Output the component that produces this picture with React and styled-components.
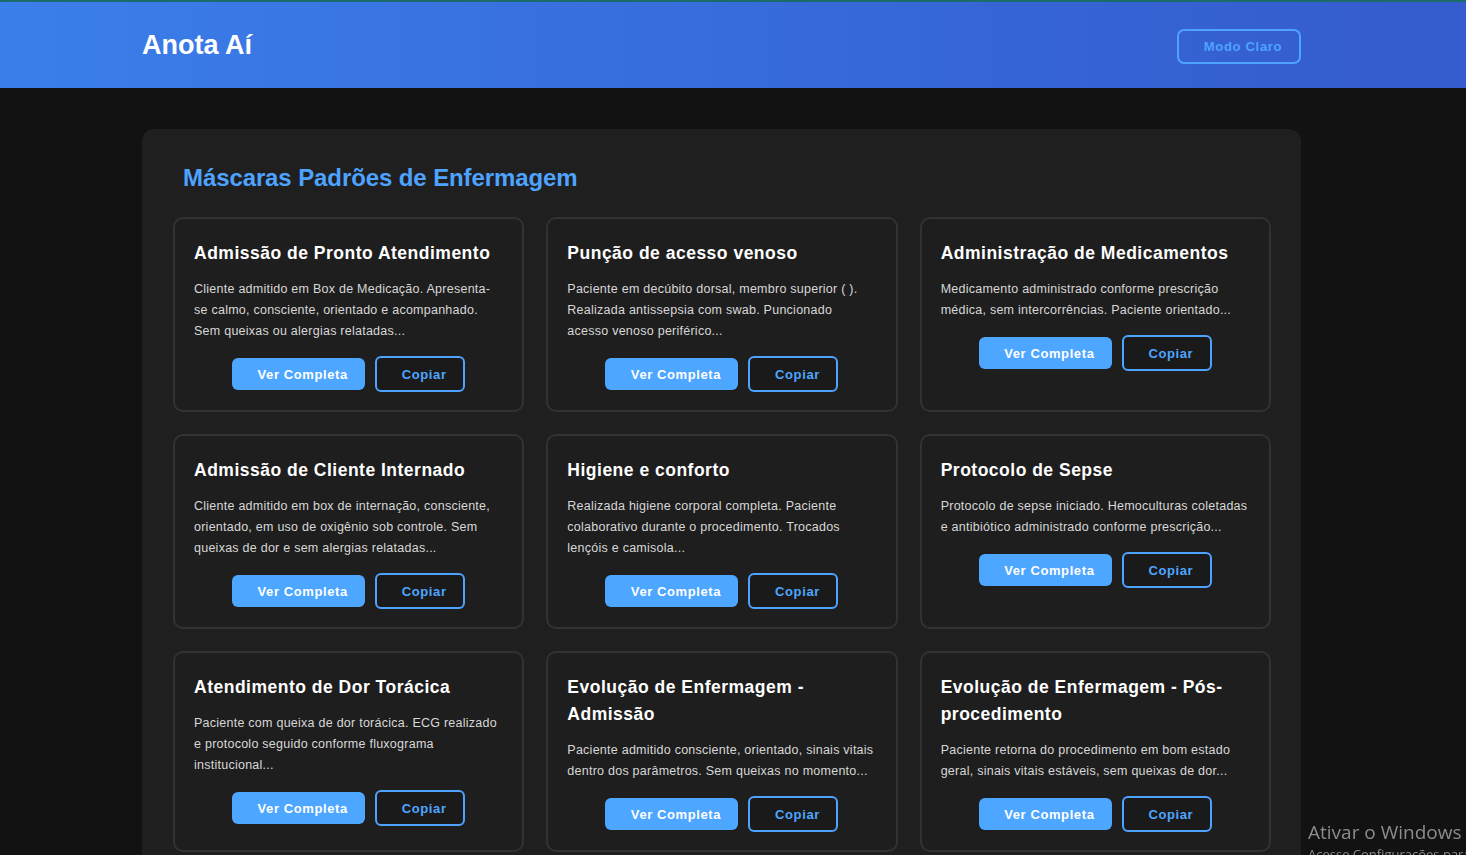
import React from 'react';
import styled, { createGlobalStyle } from 'styled-components';

const GlobalStyle = createGlobalStyle`
  * { box-sizing: border-box; }
  body {
    margin: 0;
    background: #121212;
    font-family: "Liberation Sans", Arial, sans-serif;
    color: #fff;
  }
`;

const masks = [
  {
    id: 1,
    title: 'Admissão de Pronto Atendimento',
    preview: 'Cliente admitido em Box de Medicação. Apresenta-se calmo, consciente, orientado e acompanhado. Sem queixas ou alergias relatadas...',
  },
  {
    id: 2,
    title: 'Punção de acesso venoso',
    preview: 'Paciente em decúbito dorsal, membro superior ( ). Realizada antissepsia com swab. Puncionado acesso venoso periférico...',
  },
  {
    id: 3,
    title: 'Administração de Medicamentos',
    preview: 'Medicamento administrado conforme prescrição médica, sem intercorrências. Paciente orientado...',
  },
  {
    id: 4,
    title: 'Admissão de Cliente Internado',
    preview: 'Cliente admitido em box de internação, consciente, orientado, em uso de oxigênio sob controle. Sem queixas de dor e sem alergias relatadas...',
  },
  {
    id: 5,
    title: 'Higiene e conforto',
    preview: 'Realizada higiene corporal completa. Paciente colaborativo durante o procedimento. Trocados lençóis e camisola...',
  },
  {
    id: 6,
    title: 'Protocolo de Sepse',
    preview: 'Protocolo de sepse iniciado. Hemoculturas coletadas e antibiótico administrado conforme prescrição...',
  },
  {
    id: 7,
    title: 'Atendimento de Dor Torácica',
    preview: 'Paciente com queixa de dor torácica. ECG realizado e protocolo seguido conforme fluxograma institucional...',
  },
  {
    id: 8,
    title: 'Evolução de Enfermagem - Admissão',
    preview: 'Paciente admitido consciente, orientado, sinais vitais dentro dos parâmetros. Sem queixas no momento...',
  },
  {
    id: 9,
    title: 'Evolução de Enfermagem - Pós-procedimento',
    preview: 'Paciente retorna do procedimento em bom estado geral, sinais vitais estáveis, sem queixas de dor...',
  },
];

const TopLine = styled.div`
  height: 2px;
  background: #1b6b68;
`;

const Header = styled.header`
  height: 86px;
  background: linear-gradient(90deg, #3b7fea 0%, #3668d8 60%, #355bcc 100%);
  padding-right: 23px;
`;

const HeaderInner = styled.div`
  max-width: 1159px;
  height: 100%;
  margin: 0 auto;
  display: flex;
  align-items: center;
  justify-content: space-between;
`;

const Logo = styled.h1`
  margin: 0;
  font-size: 27px;
  font-weight: 700;
  color: #fff;
`;

const ThemeButton = styled.button`
  width: 124px;
  height: 35px;
  margin-top: 2px;
  padding: 0 10px 0 18px;
  background: transparent;
  border: 2px solid #4da3ff;
  border-radius: 7px;
  color: #4da3ff;
  font-family: inherit;
  font-size: 13px;
  font-weight: 700;
  letter-spacing: 0.7px;
  cursor: pointer;
`;

const Page = styled.main`
  padding: 41px 23px 40px 0;
`;

const Panel = styled.section`
  max-width: 1159px;
  margin: 0 auto;
  background: #1f1f1f;
  border-radius: 12px;
  padding: 30px 30px 40px 31px;
`;

const PanelTitle = styled.h2`
  margin: 0 0 20px 10px;
  font-size: 24px;
  line-height: 38px;
  font-weight: 700;
  letter-spacing: -0.1px;
  color: #4da3ff;
`;

const Grid = styled.div`
  display: grid;
  grid-template-columns: repeat(3, 1fr);
  gap: 22px;
`;

const Card = styled.article`
  background: #1e1e1e;
  border: 2px solid #323232;
  border-radius: 10px;
  padding: 21px 21px 18px 19px;
`;

const CardTitle = styled.h3`
  margin: 0 0 12px;
  font-size: 17.5px;
  line-height: 27px;
  font-weight: 700;
  letter-spacing: 0.5px;
  color: #fff;
`;

const Preview = styled.p`
  margin: 0 0 14px;
  font-size: 12.5px;
  line-height: 21px;
  color: #d8d8d8;
  letter-spacing: 0.25px;
`;

const Actions = styled.div`
  display: flex;
  justify-content: center;
  align-items: center;
  gap: 10px;
  margin-right: -2px;
`;

const ActionButton = styled.button`
  height: ${({ $primary }) => ($primary ? '32px' : '36px')};
  width: ${({ $primary }) => ($primary ? '133px' : '90px')};
  padding: 0 8px 0 16px;
  border-radius: 6px;
  border: ${({ $primary }) => ($primary ? 'none' : '2px solid #4da3ff')};
  background: ${({ $primary }) => ($primary ? '#4da6ff' : '#1a1a1a')};
  color: ${({ $primary }) => ($primary ? '#fff' : '#4da6ff')};
  font-family: inherit;
  font-size: 13px;
  font-weight: 700;
  letter-spacing: 0.6px;
  cursor: pointer;
`;

const Watermark = styled.div`
  position: fixed;
  left: 1308px;
  top: 819px;
  white-space: nowrap;
  font-family: "Open Sans", "Noto Sans", sans-serif;
  color: #8c8c8c;
  pointer-events: none;

  .big {
    font-size: 19px;
    line-height: 26px;
  }
  .small {
    font-size: 13px;
    line-height: 18px;
  }
`;

const App = () => (
  <>
    <GlobalStyle />
    <TopLine />
    <Header>
      <HeaderInner>
        <Logo>Anota Aí</Logo>
        <ThemeButton type="button">Modo Claro</ThemeButton>
      </HeaderInner>
    </Header>
    <Page>
      <Panel>
        <PanelTitle>Máscaras Padrões de Enfermagem</PanelTitle>
        <Grid>
          {masks.map((mask) => (
            <Card key={mask.id}>
              <CardTitle>{mask.title}</CardTitle>
              <Preview>{mask.preview}</Preview>
              <Actions>
                <ActionButton type="button" $primary>Ver Completa</ActionButton>
                <ActionButton type="button">Copiar</ActionButton>
              </Actions>
            </Card>
          ))}
        </Grid>
      </Panel>
    </Page>
    <Watermark>
      <div className="big">Ativar o Windows</div>
      <div className="small">Acesse Configurações para ativar o Windows.</div>
    </Watermark>
  </>
);

export default App;
